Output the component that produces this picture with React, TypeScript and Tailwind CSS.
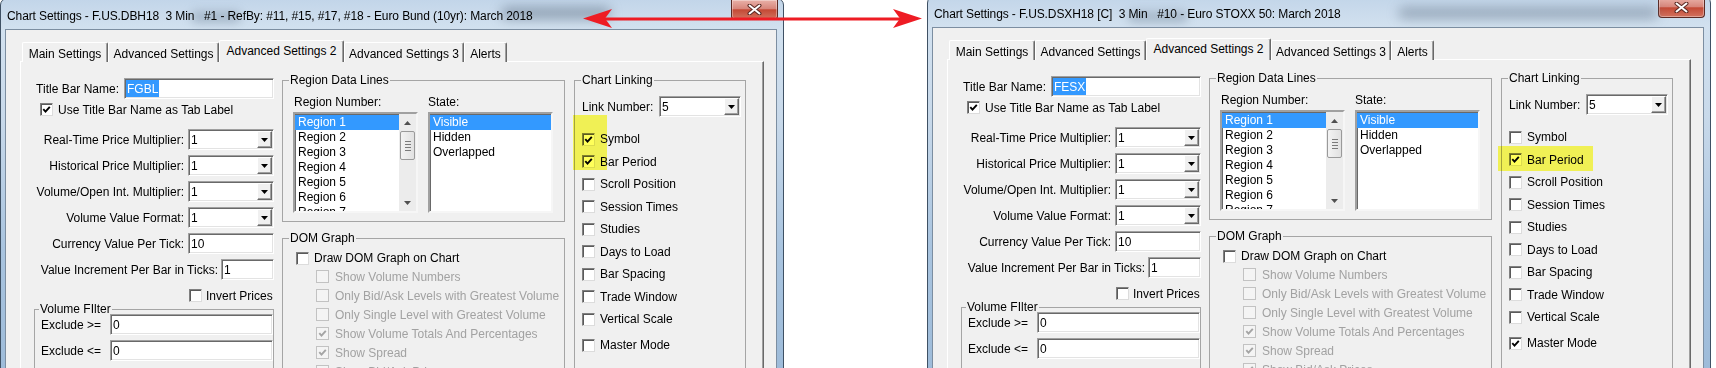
import React from "react";

type Row = { label: string; checked?: boolean };

const linkRows = [
  "Symbol",
  "Bar Period",
  "Scroll Position",
  "Session Times",
  "Studies",
  "Days to Load",
  "Bar Spacing",
  "Trade Window",
  "Vertical Scale",
];

const domRows: Row[] = [
  { label: "Show Volume Numbers" },
  { label: "Only Bid/Ask Levels with Greatest Volume" },
  { label: "Only Single Level with Greatest Volume" },
  { label: "Show Volume Totals And Percentages", checked: true },
  { label: "Show Spread", checked: true },
  { label: "Show Bid/Ask Prices", checked: true },
];

const comboRows = [
  "Real-Time Price Multiplier:",
  "Historical Price Multiplier:",
  "Volume/Open Int. Multiplier:",
  "Volume Value Format:",
];

const tabs = [
  { name: "Main Settings", w: "w-[86px]" },
  { name: "Advanced Settings", w: "w-[111px]" },
  { name: "Advanced Settings 2", w: "w-[125px]", active: true },
  { name: "Advanced Settings 3", w: "w-[120px]" },
  { name: "Alerts", w: "w-[43px]" },
];

function CheckBox({ checked = false, disabled = false }: { checked?: boolean; disabled?: boolean }) {
  return (
    <span
      className={`flex h-[13px] w-[13px] shrink-0 items-center justify-center border ${
        disabled
          ? "border-[#c2c2c2] bg-[#f4f4f4]"
          : "border-t-[#808080] border-l-[#808080] border-r-[#dcdcdc] border-b-[#dcdcdc] bg-white shadow-[inset_1px_1px_0_#5a5a5a]"
      }`}
    >
      {checked && (
        <svg width="9" height="9" viewBox="0 0 9 9">
          <path
            d="M1.3 4.2 L3.5 6.6 L7.8 1.8"
            fill="none"
            stroke={disabled ? "#a4a4a4" : "#000"}
            strokeWidth="1.9"
          />
        </svg>
      )}
    </span>
  );
}

function TextBox({ value, selected, className }: { value: string; selected?: boolean; className: string }) {
  return (
    <div
      className={`flex h-[21px] shrink-0 items-stretch border border-t-[#a0a0a0] border-l-[#a0a0a0] border-r-white border-b-white bg-white py-[1px] pl-[1px] shadow-[inset_1px_1px_0_#696969,inset_-1px_-1px_0_#e3e3e3] ${className}`}
    >
      <span
        className={`flex items-center px-[1px] ${selected ? "bg-[#3399ff] text-white" : ""}`}
      >
        {value}
      </span>
    </div>
  );
}

function Combo({ value, className }: { value: string; className: string }) {
  return (
    <div
      className={`flex h-[21px] shrink-0 items-stretch border border-t-[#a0a0a0] border-l-[#a0a0a0] border-r-white border-b-white bg-white shadow-[inset_1px_1px_0_#696969,inset_-1px_-1px_0_#e3e3e3] ${className}`}
    >
      <span className="flex flex-1 items-center pl-[2px]">{value}</span>
      <span className="my-[1px] mr-[1px] flex w-[15px] items-center justify-center border border-t-white border-l-white border-r-[#696969] border-b-[#696969] bg-[#f0f0f0] shadow-[inset_-1px_-1px_0_#a0a0a0]">
        <svg width="7" height="4" viewBox="0 0 7 4">
          <path d="M0 0H7L3.5 4Z" fill="#000" />
        </svg>
      </span>
    </div>
  );
}

function ScrollBar() {
  return (
    <div className="flex w-[17px] shrink-0 flex-col bg-[#ececec]">
      <div className="flex h-[17px] items-center justify-center">
        <svg width="7" height="4" viewBox="0 0 7 4">
          <path d="M0 4H7L3.5 0Z" fill="#505050" />
        </svg>
      </div>
      <div className="mx-[1px] flex h-[29px] flex-col items-center justify-center gap-[2px] rounded-[2px] border border-[#9a9a9a] bg-[linear-gradient(90deg,#f3f3f3,#e1e1e1)]">
        <span className="h-px w-[6px] bg-[#7a7a7a]" />
        <span className="h-px w-[6px] bg-[#7a7a7a]" />
        <span className="h-px w-[6px] bg-[#7a7a7a]" />
        <span className="h-px w-[6px] bg-[#7a7a7a]" />
      </div>
      <div className="flex-1" />
      <div className="flex h-[17px] items-center justify-center">
        <svg width="7" height="4" viewBox="0 0 7 4">
          <path d="M0 0H7L3.5 4Z" fill="#505050" />
        </svg>
      </div>
    </div>
  );
}

function ListBox({ items, scroll }: { items: string[]; scroll?: boolean }) {
  return (
    <div className="flex h-[101px] w-[125px] overflow-hidden border-2 border-t-[#a0a0a0] border-l-[#a0a0a0] border-r-[#f6f6f6] border-b-[#f6f6f6] bg-white shadow-[inset_1px_1px_0_#696969]">
      <div className="flex-1 overflow-hidden pt-[1px]">
        {items.map((item, i) => (
          <div
            key={item}
            className={`h-[15px] pl-[3px] leading-[15px] ${i === 0 ? "bg-[#3399ff] text-white" : ""}`}
          >
            {item}
          </div>
        ))}
      </div>
      {scroll && <ScrollBar />}
    </div>
  );
}

function CloseButton() {
  return (
    <div className="mr-[5px] mt-[1px] flex h-[20px] w-[47px] items-center justify-center rounded-b-[4px] border border-t-0 border-[#5c2a24] bg-[linear-gradient(180deg,#e9b1a8_0%,#d8877c_45%,#c44a36_52%,#d2725f_100%)] shadow-[inset_0_0_0_1px_rgba(255,255,255,0.35)]">
      <svg width="15" height="11" viewBox="0 0 15 11">
        <path d="M2.5 1.5 L12.5 9.5 M12.5 1.5 L2.5 9.5" stroke="#5b2a24" strokeWidth="4" strokeLinecap="round" />
        <path d="M2.5 1.5 L12.5 9.5 M12.5 1.5 L2.5 9.5" stroke="#ffffff" strokeWidth="2" strokeLinecap="round" />
      </svg>
    </div>
  );
}

function Dialog({
  title,
  name,
  links,
  master,
  className,
  blobs,
}: {
  title: string;
  name: string;
  links: boolean[];
  master: boolean;
  className: string;
  blobs: React.ReactNode;
}) {
  return (
    <div
      className={`flex w-[784px] shrink-0 flex-col rounded-t-[7px] border border-[#3f5164] bg-[linear-gradient(180deg,#c2d5e9_0px,#d2e1ef_30px,#c8d9ea_120px,#a9c4df_250px,#9dbbd9_380px)] ${className}`}
    >
      {/* TITLE BAR */}
      <div className="relative flex h-[30px] items-start justify-between overflow-hidden">
        {blobs}
        <span className="relative ml-[6px] mt-[10px] whitespace-pre leading-[14px] tracking-[-0.1px] text-black">
          {title}
        </span>
        <CloseButton />
      </div>

      {/* CLIENT AREA */}
      <div className="ml-[4px] h-[345px] w-[772px] border border-[#7c8ea1] bg-[#f0f0f0] pt-[10px]">
        {/* TABS */}
        <div className="ml-[16px] flex h-[22px] items-end">
          {tabs.map((t) => (
            <div
              key={t.name}
              className={`flex shrink-0 items-center justify-center rounded-t-[2px] border-t border-l border-r border-t-white border-l-white border-r-[#696969] bg-[#f0f0f0] ${t.w} ${
                t.active
                  ? "relative z-10 h-[22px] pb-[1px] shadow-[inset_-1px_0_0_#a0a0a0]"
                  : "h-[20px] pt-[2px] shadow-[inset_-1px_0_0_#a0a0a0]"
              }`}
            >
              {t.name}
            </div>
          ))}
        </div>

        {/* TAB PANEL */}
        <div className="-mt-[1px] ml-[14px] flex h-[320px] w-[744px] items-start border border-t-white border-l-white border-r-[#696969] border-b-[#696969] pl-[13px] pt-[10px] shadow-[inset_-1px_-1px_0_#a0a0a0]">
          {/* LEFT COLUMN */}
          <div className="mt-[6px] flex w-[240px] shrink-0 flex-col">
            <div className="flex h-[21px] items-center justify-end gap-[5px]">
              <span>Title Bar Name:</span>
              <TextBox value={name} selected className="w-[150px]" />
            </div>

            <div className="mt-[4px] flex h-[13px] items-center gap-[5px] pl-[6px]">
              <CheckBox checked />
              <span>Use Title Bar Name as Tab Label</span>
            </div>

            {comboRows.map((label, i) => (
              <div
                key={label}
                className={`flex h-[21px] items-center justify-end gap-[4px] ${i === 0 ? "mt-[13px]" : "mt-[5px]"}`}
              >
                <span>{label}</span>
                <Combo value="1" className="w-[86px]" />
              </div>
            ))}

            <div className="mt-[5px] flex h-[21px] items-center justify-end gap-[4px]">
              <span>Currency Value Per Tick:</span>
              <TextBox value="10" className="w-[86px]" />
            </div>

            <div className="mt-[5px] flex h-[21px] items-center justify-end gap-[3px]">
              <span>Value Increment Per Bar in Ticks:</span>
              <TextBox value="1" className="w-[53px]" />
            </div>

            <div className="mt-[9px] flex h-[13px] items-center gap-[4px] pl-[155px]">
              <CheckBox />
              <span>Invert Prices</span>
            </div>

            <fieldset className="h-[80px] border border-[#a5a5a5]">
              <legend className="ml-[4px] px-[1px] leading-[14px]">Volume FIlter</legend>
              <div className="-mt-[2px] flex h-[21px] items-center pl-[6px]">
                <span>Exclude &gt;=</span>
                <TextBox value="0" className="ml-auto w-[163px]" />
              </div>
              <div className="mt-[5px] flex h-[21px] items-center pl-[6px]">
                <span>Exclude &lt;=</span>
                <TextBox value="0" className="ml-auto w-[163px]" />
              </div>
            </fieldset>
          </div>

          {/* MIDDLE COLUMN */}
          <div className="ml-[8px] mt-[1px] flex w-[283px] shrink-0 flex-col">
            <fieldset className="border border-[#a5a5a5] pb-[8px] pl-[10px]">
              <legend className="ml-[-4px] px-[1px] leading-[14px]">Region Data Lines</legend>
              <div className="mt-[8px] flex h-[14px] gap-[10px] leading-[14px]">
                <span className="w-[125px] pl-[1px]">Region Number:</span>
                <span className="w-[125px]">State:</span>
              </div>
              <div className="mt-[3px] flex gap-[10px]">
                <ListBox
                  scroll
                  items={["Region 1", "Region 2", "Region 3", "Region 4", "Region 5", "Region 6", "Region 7"]}
                />
                <ListBox items={["Visible", "Hidden", "Overlapped"]} />
              </div>
            </fieldset>

            <fieldset className="mt-[9px] h-[200px] border border-[#a5a5a5]">
              <legend className="ml-[6px] px-[1px] leading-[14px]">DOM Graph</legend>
              <div className="mt-[4px] flex h-[18px] items-center gap-[5px] pl-[13px]">
                <CheckBox />
                <span>Draw DOM Graph on Chart</span>
              </div>
              {domRows.map((r) => (
                <div key={r.label} className="flex h-[19px] items-center gap-[6px] pl-[33px] text-[#a2a2a2]">
                  <CheckBox disabled checked={r.checked} />
                  <span className="whitespace-nowrap">{r.label}</span>
                </div>
              ))}
            </fieldset>
          </div>

          {/* RIGHT COLUMN */}
          <fieldset className="ml-[9px] mt-[1px] h-[300px] w-[172px] shrink-0 border border-[#a5a5a5]">
            <legend className="ml-[6px] px-[1px] leading-[14px]">Chart Linking</legend>
            <div className="mt-[9px] flex h-[21px] items-center pl-[7px] pr-[4px]">
              <span>Link Number:</span>
              <Combo value="5" className="ml-auto w-[82px]" />
            </div>
            <div className="mt-[11px] flex flex-col">
              {linkRows.map((label, i) => (
                <div key={label} className="flex h-[22.5px] items-center gap-[5px] pl-[7px]">
                  <CheckBox checked={links[i]} />
                  <span>{label}</span>
                </div>
              ))}
              <div className="mt-[3.5px] flex h-[22.5px] items-center gap-[5px] pl-[7px]">
                <CheckBox checked={master} />
                <span>Master Mode</span>
              </div>
            </div>
          </fieldset>
        </div>
      </div>
    </div>
  );
}

export default function App() {
  return (
    <div className="relative h-[368px] w-[1716px] overflow-hidden bg-white font-['Liberation_Sans',Arial,sans-serif] text-[12px] text-black">
      <div className="flex items-start">
        <Dialog
          className="-mt-[2px]"
          title="Chart Settings - F.US.DBH18  3 Min   #1 - RefBy: #11, #15, #17, #18 - Euro Bund (10yr): March 2018"
          name="FGBL"
          links={[true, true, false, false, false, false, false, false, false]}
          master={false}
          blobs={
            <>
              <span className="absolute left-[190px] top-[12px] h-[12px] w-[50px] rounded-full bg-[#6f8296]/40 blur-[5px]" />
              <span className="absolute left-[500px] top-[8px] h-[12px] w-[110px] rounded-full bg-[#56687b]/50 blur-[6px]" />
            </>
          }
        />
        <Dialog
          className="-mt-[4px] ml-[143px]"
          title="Chart Settings - F.US.DSXH18 [C]  3 Min   #10 - Euro STOXX 50: March 2018"
          name="FESX"
          links={[false, true, false, false, false, false, false, false, false]}
          master
          blobs={
            <>
              <span className="absolute left-[200px] top-[14px] h-[12px] w-[60px] rounded-full bg-[#6f8296]/40 blur-[5px]" />
              <span className="absolute left-[470px] top-[10px] h-[12px] w-[260px] rounded-full bg-[#5d6f82]/45 blur-[6px]" />
            </>
          }
        />
      </div>

      {/* YELLOW HIGHLIGHTS */}
      <div className="pointer-events-none absolute left-[573px] top-[115px] h-[55px] w-[34px] bg-[#ffff5a] mix-blend-multiply" />
      <div className="pointer-events-none absolute left-[1498px] top-[146px] h-[25px] w-[95px] bg-[#ffff5a] mix-blend-multiply" />

      {/* RED DOUBLE ARROW */}
      <svg className="pointer-events-none absolute left-0 top-0" width="1716" height="40" viewBox="0 0 1716 40">
        <line x1="604" y1="19" x2="901" y2="19" stroke="#ee1c24" strokeWidth="3" />
        <path d="M583 18.5 L612 9 L605 18.5 L612 28 Z" fill="#ee1c24" />
        <path d="M922 18.5 L893 9 L900 18.5 L893 28 Z" fill="#ee1c24" />
      </svg>
    </div>
  );
}
